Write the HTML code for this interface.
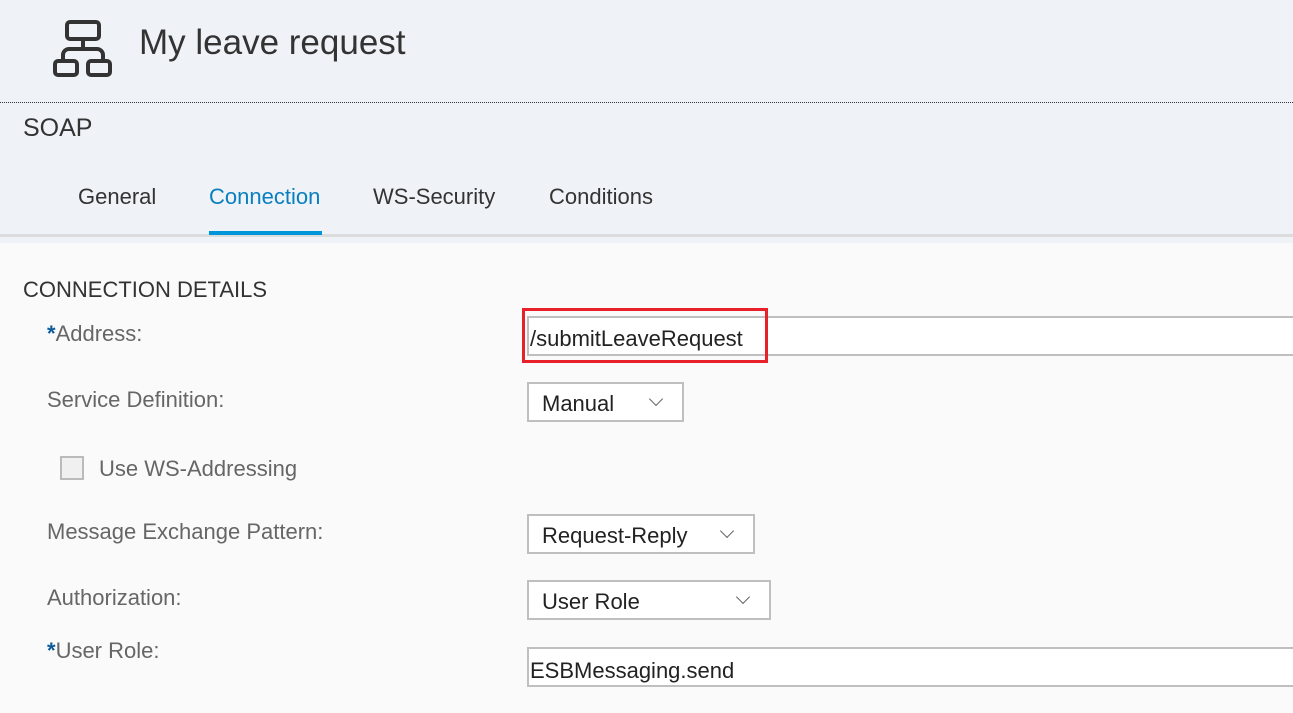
<!DOCTYPE html>
<html><head><style>
body{margin:0;width:1293px;height:713px;overflow:hidden;background:#fafafa;font-family:"Liberation Sans",sans-serif;position:relative}
.a{position:absolute;white-space:nowrap}
.lbl{color:#666;font-size:22px}
.box{position:absolute;background:#fff;border:2px solid #bfbfbf;box-sizing:border-box;font-size:21px;color:#222}
.chev{position:absolute;width:9px;height:9px;border-right:1.5px solid #666;border-bottom:1.5px solid #666;transform:rotate(45deg)}
</style></head><body>
<div class="a" style="left:0;top:0;width:1293px;height:243px;background:#eff3f7"></div>
<div class="a" style="left:0;top:102px;width:1293px;border-top:1px dotted #333"></div>
<svg class="a" style="left:52px;top:19px" width="60" height="60" viewBox="0 0 60 60" fill="none" stroke="#333" stroke-width="4"><rect x="15" y="3" width="32" height="17" rx="3"/><path d="M31 20v9M11 42v-6a6 6 0 0 1 6-6h28a6 6 0 0 1 6 6v6"/><rect x="3" y="42" width="22" height="14" rx="3"/><rect x="36" y="42" width="22" height="14" rx="3"/></svg>
<div class="a" style="left:139px;top:23px;font-size:35px;color:#333">My leave request</div>
<div class="a" style="left:23px;top:114px;font-size:25px;color:#333">SOAP</div>
<div class="a" style="left:78px;top:184px;font-size:22px;color:#333">General</div>
<div class="a" style="left:209px;top:184px;font-size:22px;color:#0a7fbf">Connection</div>
<div class="a" style="left:373px;top:184px;font-size:22px;color:#333">WS-Security</div>
<div class="a" style="left:549px;top:184px;font-size:22px;color:#333">Conditions</div>
<div class="a" style="left:0;top:234px;width:1293px;height:3px;background:#dcdcdc"></div>
<div class="a" style="left:209px;top:231px;width:113px;height:4px;background:#0095d9"></div>
<div class="a" style="left:23px;top:277px;font-size:22px;color:#333">CONNECTION DETAILS</div>
<div class="a lbl" style="left:47px;top:321px"><span style="color:#0a5a9c;font-weight:bold">*</span>Address:</div>
<div class="box" style="left:527px;top:316px;width:780px;height:40px;padding:8px 0 0 1px;font-size:22px">/submitLeaveRequest</div>
<div class="a" style="left:522px;top:308px;width:240px;height:49px;border:3px solid #e8202a"></div>
<div class="a lbl" style="left:47px;top:387px">Service Definition:</div>
<div class="box" style="left:527px;top:382px;width:157px;height:40px;padding:7px 0 0 13px;font-size:22px">Manual</div>
<div class="chev" style="left:651px;top:394px"></div>
<div class="a" style="left:60px;top:456px;width:24px;height:24px;border:2px solid #bbb;background:#f0f0f0;box-sizing:border-box"></div>
<div class="a lbl" style="left:99px;top:456px">Use WS-Addressing</div>
<div class="a lbl" style="left:47px;top:519px">Message Exchange Pattern:</div>
<div class="box" style="left:527px;top:514px;width:228px;height:40px;padding:7px 0 0 13px;font-size:22px">Request-Reply</div>
<div class="chev" style="left:722px;top:526px"></div>
<div class="a lbl" style="left:47px;top:585px">Authorization:</div>
<div class="box" style="left:527px;top:580px;width:244px;height:40px;padding:7px 0 0 13px;font-size:22px">User Role</div>
<div class="chev" style="left:738px;top:592px"></div>
<div class="a lbl" style="left:47px;top:638px"><span style="color:#0a5a9c;font-weight:bold">*</span>User Role:</div>
<div class="box" style="left:527px;top:647px;width:780px;height:40px;padding:9px 0 0 1px;font-size:22px">ESBMessaging.send</div>
</body></html>
